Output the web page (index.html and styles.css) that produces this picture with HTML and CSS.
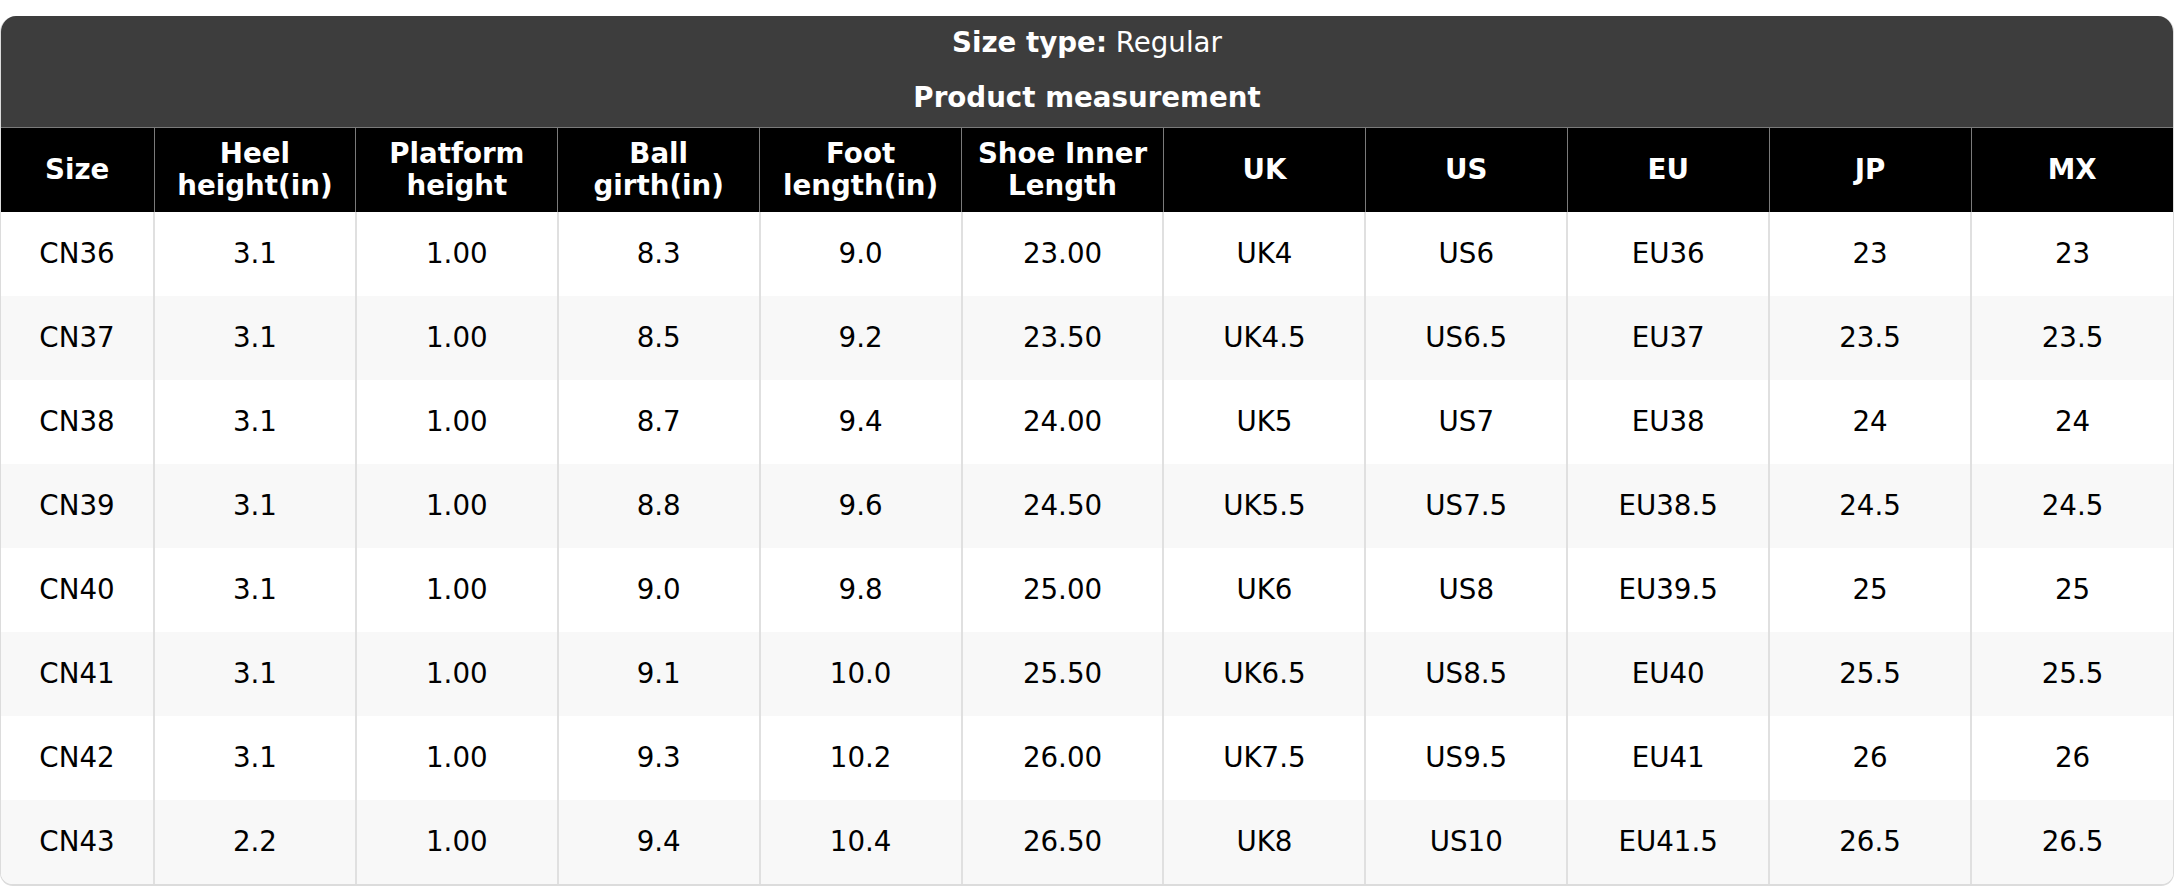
FILE: index.html
```html
<!DOCTYPE html>
<html>
<head>
<meta charset="utf-8">
<link rel="stylesheet" href="styles.css">
</head>
<body>
<div class="card">
  <div class="banner">
    <div class="banner-line"><b>Size type:</b> Regular</div>
    <div class="banner-line banner-title">Product measurement</div>
  </div>
  <table class="sizes">
    <colgroup>
      <col class="c-first">
      <col><col><col><col><col><col><col><col><col><col>
    </colgroup>
    <thead>
      <tr>
        <th>Size</th>
        <th>Heel<br>height(in)</th>
        <th>Platform<br>height</th>
        <th>Ball<br>girth(in)</th>
        <th>Foot<br>length(in)</th>
        <th>Shoe Inner<br>Length</th>
        <th>UK</th>
        <th>US</th>
        <th>EU</th>
        <th>JP</th>
        <th>MX</th>
      </tr>
    </thead>
    <tbody>
      <tr><td>CN36</td><td>3.1</td><td>1.00</td><td>8.3</td><td>9.0</td><td>23.00</td><td>UK4</td><td>US6</td><td>EU36</td><td>23</td><td>23</td></tr>
      <tr><td>CN37</td><td>3.1</td><td>1.00</td><td>8.5</td><td>9.2</td><td>23.50</td><td>UK4.5</td><td>US6.5</td><td>EU37</td><td>23.5</td><td>23.5</td></tr>
      <tr><td>CN38</td><td>3.1</td><td>1.00</td><td>8.7</td><td>9.4</td><td>24.00</td><td>UK5</td><td>US7</td><td>EU38</td><td>24</td><td>24</td></tr>
      <tr><td>CN39</td><td>3.1</td><td>1.00</td><td>8.8</td><td>9.6</td><td>24.50</td><td>UK5.5</td><td>US7.5</td><td>EU38.5</td><td>24.5</td><td>24.5</td></tr>
      <tr><td>CN40</td><td>3.1</td><td>1.00</td><td>9.0</td><td>9.8</td><td>25.00</td><td>UK6</td><td>US8</td><td>EU39.5</td><td>25</td><td>25</td></tr>
      <tr><td>CN41</td><td>3.1</td><td>1.00</td><td>9.1</td><td>10.0</td><td>25.50</td><td>UK6.5</td><td>US8.5</td><td>EU40</td><td>25.5</td><td>25.5</td></tr>
      <tr><td>CN42</td><td>3.1</td><td>1.00</td><td>9.3</td><td>10.2</td><td>26.00</td><td>UK7.5</td><td>US9.5</td><td>EU41</td><td>26</td><td>26</td></tr>
      <tr><td>CN43</td><td>2.2</td><td>1.00</td><td>9.4</td><td>10.4</td><td>26.50</td><td>UK8</td><td>US10</td><td>EU41.5</td><td>26.5</td><td>26.5</td></tr>
    </tbody>
  </table>
</div>
</body>
</html>
```

FILE: styles.css
```css
html, body {
  margin: 0;
  padding: 0;
  background: #ffffff;
}

body {
  padding-top: 16px;
  font-family: "DejaVu Sans", Verdana, sans-serif;
  font-size: 27.7px;
  color: #000;
}

.card {
  width: 2174px;
  box-sizing: border-box;
  border-radius: 16px 16px 13px 13px;
  overflow: hidden;
  border-left: 1px solid #dcdcdc;
  border-right: 1px solid #dcdcdc;
  border-bottom: 2px solid #dcdcdc;
  background: #fff;
}

.banner {
  background: #3d3d3d;
  color: #fff;
  text-align: center;
  padding: 11px 0 14px;
  height: 112px;
  box-sizing: border-box;
  border-bottom: 1px solid #7a7a7a;
}

.banner-line {
  line-height: 32px;
  height: 32px;
}

.banner-title {
  margin-top: 23px;
  font-weight: bold;
}

.sizes {
  width: 100%;
  border-collapse: collapse;
  table-layout: fixed;
}

.c-first {
  width: 153px;
}

.sizes th {
  background: #000;
  color: #fff;
  font-weight: bold;
  height: 84px;
  line-height: 32px;
  padding: 0;
  text-align: center;
  vertical-align: middle;
  border-left: 1px solid #7a7a7a;
}

.sizes th:first-child,
.sizes td:first-child {
  border-left: none;
}

.sizes td {
  height: 84px;
  padding: 0;
  text-align: center;
  vertical-align: middle;
  line-height: 32px;
  border-left: 2px solid #e0e0e0;
}

.sizes tbody tr:nth-child(even) td {
  background: #f8f8f8;
}
```
